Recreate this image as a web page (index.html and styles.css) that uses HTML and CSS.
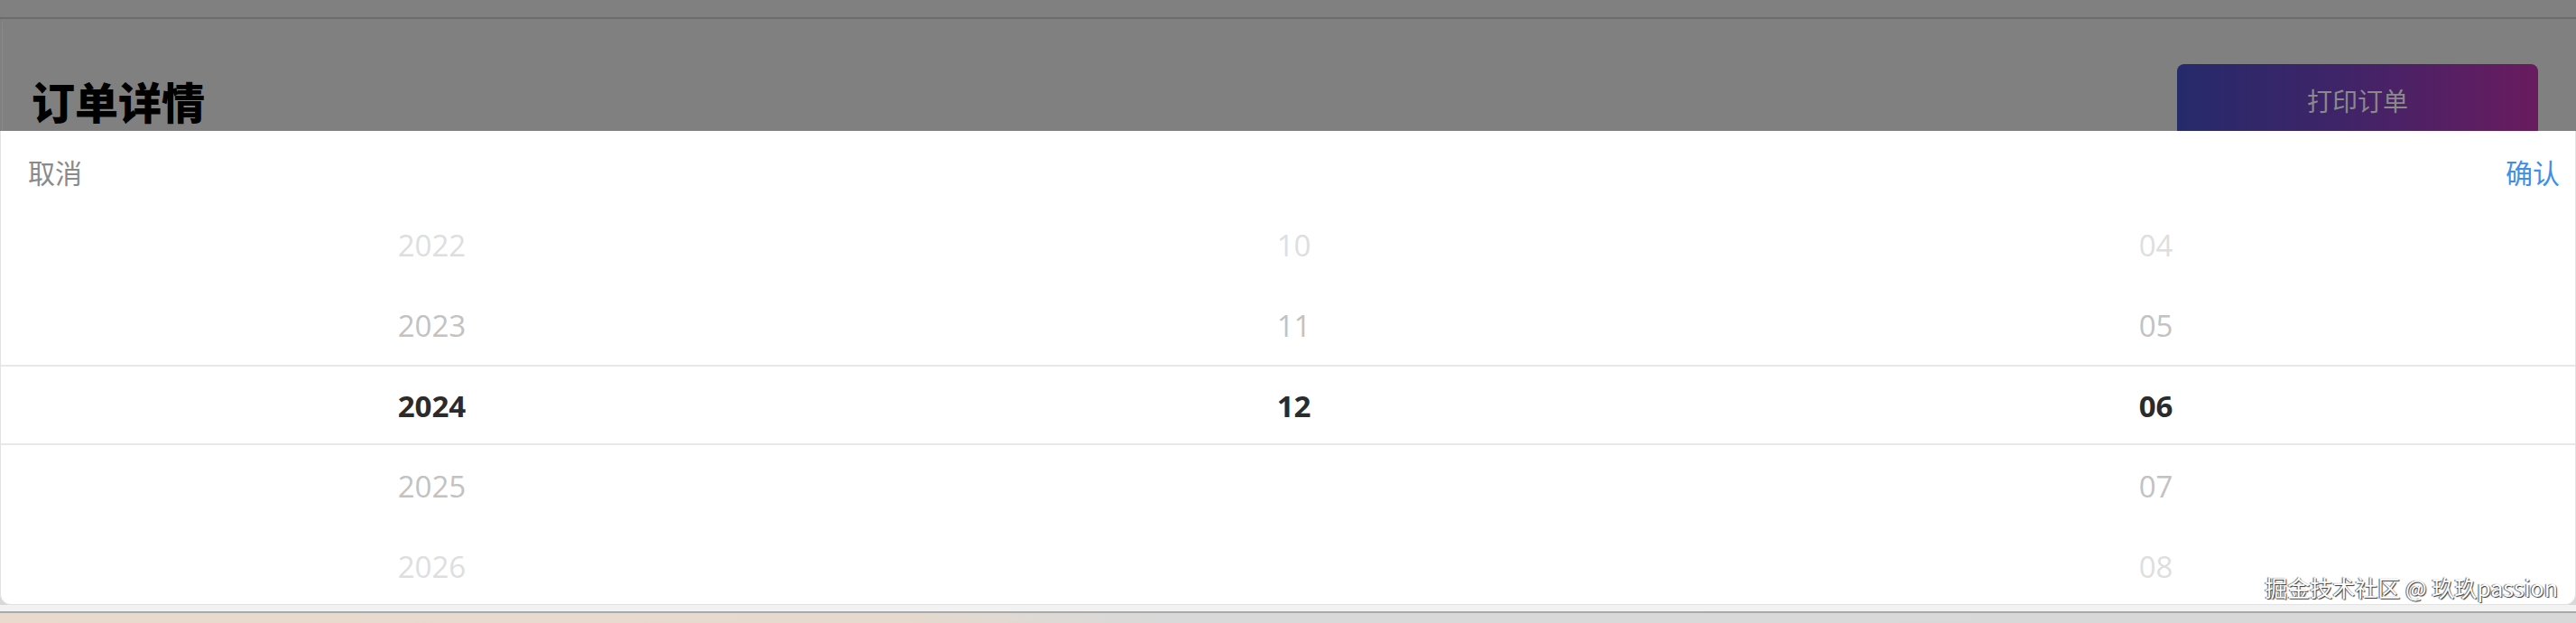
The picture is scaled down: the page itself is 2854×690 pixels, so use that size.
FILE: index.html
```html
<!DOCTYPE html>
<html lang="zh-CN">
<head>
<meta charset="utf-8">
<title>订单详情</title>
<link rel="stylesheet" href="styles.css">
</head>
<body>
<div class="backdrop">
  <div class="topbar"></div>
  <div class="card">
    <h1 class="title">订单详情</h1>
    <div class="print-btn">打印订单</div>
  </div>
</div>
<div class="sheet">
  <div class="sheet-header">
    <span class="cancel">取消</span>
    <span class="confirm">确认</span>
  </div>
  <div class="picker">
    <div class="col">
      <div class="item far">2022</div>
      <div class="item near">2023</div>
      <div class="item sel">2024</div>
      <div class="item near">2025</div>
      <div class="item far">2026</div>
    </div>
    <div class="col">
      <div class="item far">10</div>
      <div class="item near">11</div>
      <div class="item sel">12</div>
      <div class="item near"></div>
      <div class="item far"></div>
    </div>
    <div class="col">
      <div class="item far">04</div>
      <div class="item near">05</div>
      <div class="item sel">06</div>
      <div class="item near">07</div>
      <div class="item far">08</div>
    </div>
  </div>
  <div class="watermark">掘金技术社区 @ 玖玖passion</div>
</div>
<div class="under">
  <div class="under-line"></div>
  <div class="under-fill"></div>
</div>
</body>
</html>
```
FILE: styles.css
```css
* { box-sizing: border-box; }
html, body { margin: 0; padding: 0; }
body {
  width: 2854px;
  height: 690px;
  overflow: hidden;
  background: #d8d8d8;
  font-family: "Noto Sans CJK SC", "Noto Sans", sans-serif;
}
.backdrop {
  height: 145px;
  background: #7f7f7f;
  overflow: hidden;
}
.topbar {
  height: 21px;
  background: #808080;
  border-bottom: 2px solid #6c6c6c;
}
.card {
  margin-left: 2px;
  height: 200px;
  background: #808080;
  border-left: 1px solid #8a8a8a;
  border-top-left-radius: 6px;
  display: flex;
  justify-content: space-between;
  align-items: flex-start;
  padding: 0 42px 0 32px;
}
.title {
  margin: 66px 0 0 0;
  font-size: 48px;
  line-height: 48px;
  font-weight: 900;
  color: #000;
}
.print-btn {
  margin-top: 50px;
  width: 400px;
  height: 80px;
  border-radius: 8px;
  background: linear-gradient(90deg, #252a6b 0%, #3f2468 45%, #6a1b5f 100%);
  color: #8a8a8a;
  font-size: 28px;
  display: flex;
  align-items: center;
  justify-content: center;
}
.sheet {
  position: relative;
  height: 525px;
  background: #fff;
  border: 1px solid #e2e2e2;
  border-top: none;
  border-radius: 0 0 12px 12px;
  overflow: hidden;
}
.sheet-header {
  height: 81px;
  display: flex;
  justify-content: space-between;
  align-items: center;
  padding: 8px 17px 0 30px;
  font-size: 30px;
}
.cancel { color: #8a8a8a; }
.confirm { color: #3f8ee8; }
.picker {
  display: flex;
}
.col {
  flex: 0 0 955px;
  display: flex;
  flex-direction: column;
}
.item {
  height: 89px;
  line-height: 92px;
  text-align: center;
  font-family: "Open Sans", "Noto Sans", sans-serif;
  font-size: 33px;
}
.far { color: #dedede; }
.near { color: #c2c2c2; }
.sel {
  color: #2b2b2b;
  font-weight: 700;
  border-top: 2px solid #e8e8e8;
  border-bottom: 2px solid #e8e8e8;
  line-height: 87px;
}
.watermark {
  position: absolute;
  right: 19px;
  bottom: 1px;
  font-size: 25px;
  color: #fff;
  text-shadow: 1px 1px 1px #333, -1px 0 1px #555;
  font-family: "Noto Sans CJK SC", "Noto Sans", sans-serif;
}
.under-line {
  height: 9px;
  background: #f2f2f2;
  border-bottom: 2px solid #a9a9a9;
}
.under-fill {
  height: 11px;
  background: linear-gradient(90deg, #e9dacd 0%, #e6d9ce 35%, #d9d9d9 45%, #d8d8d8 100%);
}
```
